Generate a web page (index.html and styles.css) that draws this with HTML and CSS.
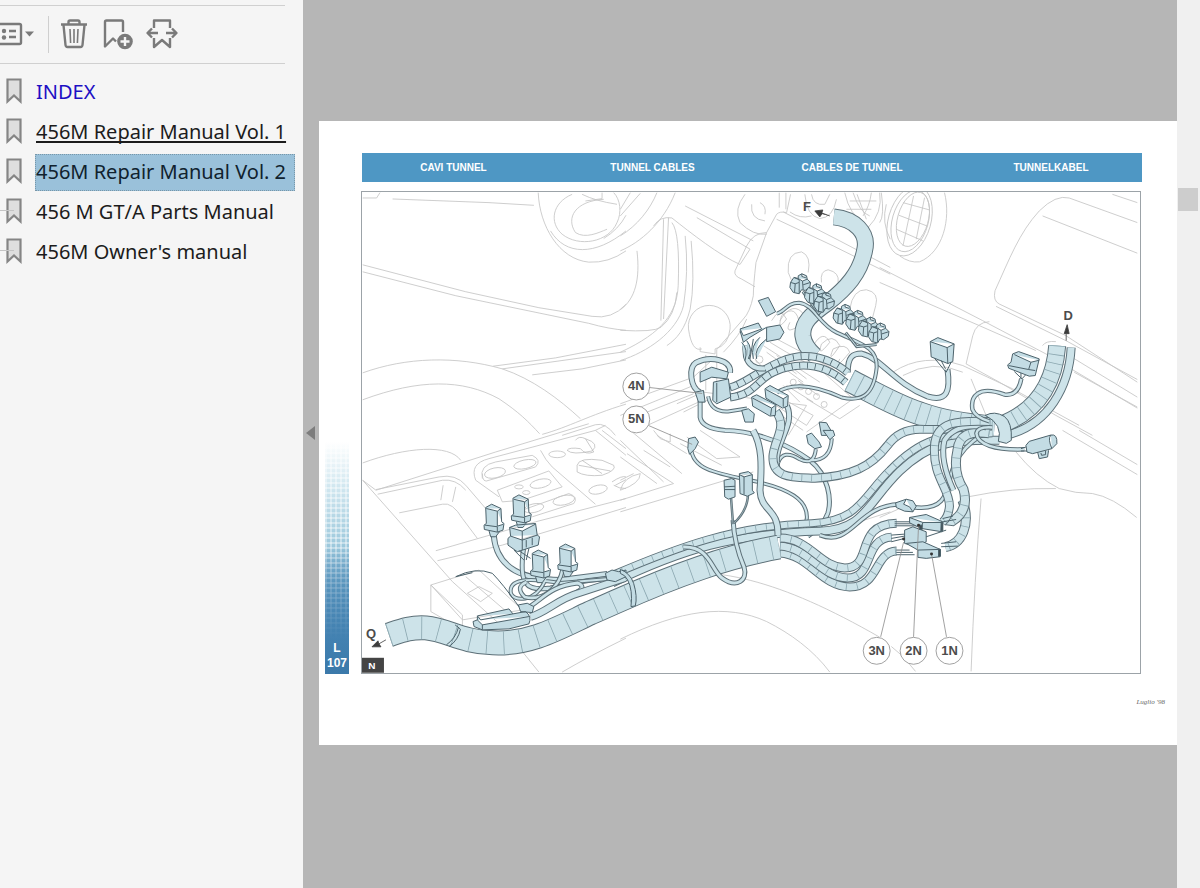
FILE: index.html
```html
<!DOCTYPE html>
<html lang="en">
<head>
<meta charset="utf-8">
<title>456M Repair Manual Vol. 2</title>
<link rel="stylesheet" href="styles.css">
</head>
<body>
<div class="app">
  <aside class="sidebar">
    <div class="toolbar">
      <button class="tool tool-options" aria-label="Options">
        <svg width="36" height="30" viewBox="0 0 36 30" class="icon"><rect x="-6" y="5" width="27" height="20" rx="1.5"/><path d="M9 12h7M9 18h7"/><g class="solid"><circle cx="4" cy="12" r="2.2"/><circle cx="4" cy="18.500" r="2.200"/><path d="M25 12.500h9l-4.500 5z"/></g></svg>
      </button>
      <span class="divider"></span>
      <button class="tool" aria-label="Delete bookmark">
        <svg width="28" height="30" viewBox="0 0 28 30" class="icon"><path d="M0 5.500h26M7.500 5V3q0-1.500 1.500-1.500h8q1.500 0 1.500 1.500v2M2.500 6l2 20q.2 2 2 2h13q1.800 0 2-2l2-20"/><path class="fine" d="M9 10l.6 14M13 10v14M17 10l-.6 14"/></svg>
      </button>
      <button class="tool" aria-label="Add bookmark">
        <svg width="30" height="30" viewBox="0 0 30 30" class="icon"><path d="M13 22.500l-3-3-8 8V3q0-1.500 1.500-1.500h15q1.500 0 1.500 1.500v10"/><circle class="solid" cx="22" cy="22.500" r="7.800"/><path class="plus" d="M22 18v9M17.500 22.500h9"/></svg>
      </button>
      <button class="tool" aria-label="Expand bookmarks">
        <svg width="32" height="30" viewBox="0 0 32 30" class="icon"><path d="M7 9V1.500h16V9M7 19v9l8-7 8 7v-9M11 14H1M19 14h10M5 9.500L.5 14 5 18.500M25 9.500l4.500 4.500-4.500 4.500"/></svg>
      </button>
    </div>
    <nav aria-label="Bookmarks">
      <ul class="bookmarks">
        <li><svg class="mark" width="16" height="26" viewBox="0 0 16 26"><path d="M1.500 1.500h13v22L8 17.500l-6.500 6z"/></svg><a class="index" href="#index">INDEX</a></li>
        <li><svg class="mark" width="16" height="26" viewBox="0 0 16 26"><path d="M1.500 1.500h13v22L8 17.500l-6.500 6z"/></svg><a class="visited" href="#vol1">456M Repair Manual Vol. 1</a></li>
        <li><svg class="mark" width="16" height="26" viewBox="0 0 16 26"><path d="M1.500 1.500h13v22L8 17.500l-6.500 6z"/></svg><a class="selected" href="#vol2" aria-current="page">456M Repair Manual Vol. 2</a></li>
        <li class="branch"><svg class="mark" width="16" height="26" viewBox="0 0 16 26"><path d="M1.500 1.500h13v22L8 17.500l-6.500 6z"/></svg><a href="#parts">456 M GT/A Parts Manual</a></li>
        <li class="branch"><svg class="mark" width="16" height="26" viewBox="0 0 16 26"><path d="M1.500 1.500h13v22L8 17.500l-6.500 6z"/></svg><a href="#owner">456M Owner's manual</a></li>
      </ul>
    </nav>
  </aside>
  <button class="collapse" aria-label="Hide panel"><svg width="10" height="14" viewBox="0 0 10 14"><path d="M9 0v14L0 7z"/></svg></button>
  <main class="viewer">
    <article class="page">
      <header class="titles"><span>CAVI TUNNEL</span><span>TUNNEL CABLES</span><span>CABLES DE TUNNEL</span><span>TUNNELKABEL</span></header>
      <div class="tab"><span>L</span><span>107</span></div>
      <figure class="plate">
        <svg id="diagram" viewBox="361 191 780 482" role="img" aria-label="Tunnel cables">
          <g class="ghost">
            <g transform="translate(355 185) scale(.33333)">
              <path d="M20 36H62L72 20M110 39L400 50L535 58M20 237L330 318L550 366L710 392Q770 402 812 356M20 258L300 330L700 413Q760 430 812 434M20 562C150 515 300 510 440 550C530 580 610 640 675 700M20 643C190 580 320 580 430 640C490 680 520 710 552 745M412 542L600 517L812 476M440 550L812 498M530 568L680 550L812 523M560 747C640 725 700 690 812 656M620 750L720 718Q750 710 780 750M720 735L750 720M548 20C552 120 610 220 700 229Q760 232 812 195M585 135C630 210 720 210 812 135M650 25C590 50 580 110 620 145C670 185 760 170 785 110C800 80 795 40 775 20M745 40C660 45 630 95 660 140C690 160 730 140 755 130M680 25Q720 45 785 55M740 20V38L690 45M745 158Q790 130 812 88"/>
            </g>
            <g transform="translate(620 185) scale(.33333)">
              <path d="M0 195C60 170 130 110 165 20M0 150C50 120 90 70 110 20M0 70L30 20M0 90L60 22M100 120Q120 90 155 96C210 140 300 210 360 236M145 95L130 400M130 100L122 405M155 110Q180 140 174 300C170 380 130 440 0 500M195 150Q206 260 190 360C170 440 80 500 0 525M213 165Q225 290 210 370C195 430 170 460 140 480M0 434Q100 440 122 425Q165 390 170 320M50 195C60 280 45 340 0 372M195 60L400 165M230 95L390 190M360 236L390 190M440 140Q400 140 380 180L345 255Q340 270 365 280L405 303M470 85L440 140L408 230Q400 300 400 330Q390 380 370 400L290 492M470 100L640 180L812 265M490 78L660 165L812 245M470 85Q480 75 500 80L512 25M375 25Q340 70 360 110Q400 150 440 145M395 55Q390 100 435 105M420 50Q440 60 435 85M478 20V65M498 20V70M510 78Q540 100 575 90M555 25Q560 90 600 98Q640 95 650 40M575 25Q580 60 615 55L630 25M675 20Q690 90 735 110M700 20Q720 80 750 90M755 20Q750 60 730 90M780 20Q790 80 745 125M800 55Q785 110 812 160M690 45H770M680 70H755M712 25L740 100M245 490Q215 500 205 430A63 63 0 1 1 330 430Q325 480 285 490V505L240 498V485M257 508V615M290 492V600M505 260Q500 200 545 198Q575 210 565 260M505 260L530 320M605 290Q600 255 625 252Q660 260 655 290M690 370Q700 310 740 312Q780 320 768 360L755 410M310 500Q360 450 380 400M0 655L220 575L290 510M0 690L220 600M30 700L220 625M70 725L235 650M170 655L250 620L560 660L505 750M190 680L270 640M450 470L500 500L610 560L700 640L560 740M470 460L640 550M480 405Q520 340 555 390M430 480L600 590M440 500L530 565M460 655L560 720L580 690L470 630M410 640L550 735M560 640L660 700L720 660M490 600L540 650M535 585L595 630"/>
              <path class="rough" d="M455 405Q480 360 500 400Q470 440 485 390Q530 350 540 420Q490 450 510 410M580 480Q610 430 630 470Q590 520 605 475Q640 440 660 480Q620 540 640 490Q680 470 690 500Q640 560 660 520M470 510L560 580M460 525L550 590M405 520L440 560M500 600L580 650"/>
              <g><circle cx="520" cy="590" r="9"/><circle cx="543" cy="604" r="9"/><circle cx="566" cy="618" r="9"/><circle cx="590" cy="633" r="9"/><circle cx="613" cy="657" r="9"/><circle cx="418" cy="522" r="11"/></g>
            </g>
            <g transform="translate(880 185) scale(.33333)">
              <ellipse cx="90" cy="105" rx="64" ry="108" transform="rotate(16 90 105)"/><ellipse cx="92" cy="105" rx="54" ry="95" transform="rotate(16 92 105)"/><ellipse cx="100" cy="100" rx="46" ry="84" transform="rotate(16 100 100)"/>
              <path d="M195 20C215 100 190 200 120 228Q90 232 60 210M70 50L150 72M58 88L142 120M50 130L130 165M102 30L70 180M135 35L110 160M0 110Q15 90 5 20M490 90L775 202M700 25L775 50M775 110L570 36Q530 25 480 75C420 140 390 220 347 315Q340 345 360 355L560 450L775 590M350 362L560 465L775 582M490 480Q500 465 530 468M0 245L310 405L500 505L775 668M0 290L300 420L470 495M570 510L775 635M585 560L775 665M330 408Q290 410 280 450L260 535L360 590L530 690L640 750M40 560Q130 500 250 540L400 610L600 720M70 570Q160 520 250 560M275 580L320 690"/>
            </g>
            <g transform="translate(355 430) scale(.33333)">
              <path d="M20 98C150 50 280 40 315 90M20 150L290 455M20 150L60 180M60 178L250 140Q300 130 330 165L390 235M65 192L260 150Q300 145 330 180M130 248L260 222Q290 215 320 265L365 325M60 180L420 65L700 -20M240 362L420 310L540 275L812 205M245 392L440 345L812 232M262 165L255 210M300 170L290 215M430 200L360 150Q340 100 400 85L720 0M380 145Q370 105 420 95L530 75Q560 90 540 110L400 150Q380 160 380 130M425 180L580 122L620 170L500 210L440 215ZM555 60Q570 90 590 110L720 222M720 0L812 75M740 0L812 55M500 240L640 190Q670 200 655 220L530 260M225 465L370 420L500 540L320 570ZM225 465V545L320 600V555M320 555L225 465M335 490L370 470L410 490L375 515ZM500 665L550 727M620 727Q700 680 812 625M290 455L440 590M330 440L470 560"/>
              <ellipse cx="418" cy="128" rx="32" ry="15" transform="rotate(-12 418 128)"/><ellipse cx="508" cy="102" rx="34" ry="13" transform="rotate(-12 508 102)"/><ellipse cx="555" cy="160" rx="32" ry="13" transform="rotate(-12 555 160)"/><ellipse cx="490" cy="170" rx="13" ry="6"/><ellipse cx="512" cy="187" rx="11" ry="6"/><ellipse cx="625" cy="210" rx="33" ry="14" transform="rotate(-12 625 210)"/><ellipse cx="535" cy="234" rx="30" ry="13" transform="rotate(-12 535 234)"/><ellipse cx="605" cy="72" rx="25" ry="10"/><ellipse cx="728" cy="178" rx="28" ry="13" transform="rotate(-12 728 178)"/>
              <path class="rough" d="M660 30Q670 15 690 25L715 65Q690 75 675 55Q640 50 635 60Q650 75 710 62Q735 40 690 25M665 105Q670 80 740 90L775 105Q785 120 740 135Q690 140 665 125ZM670 105L765 122M680 90L740 130M770 155Q800 135 812 140M775 165Q790 175 812 175M780 165L812 148"/>
            </g>
            <g transform="translate(620 430) scale(.33333)">
              <path d="M0 245L400 125M0 210L160 160L20 70M0 80L110 160M0 30L130 155M110 15L200 70M30 0L185 130M100 0L120 25L150 35V10M180 40L305 105M200 20L290 85L360 80L240 0M0 180Q10 140 60 130Q60 160 0 180M0 150L40 130M70 60L150 110M80 440C280 400 480 450 780 622M0 628C180 540 320 520 440 575C510 610 580 660 630 727M640 300L812 245"/>
            </g>
            <g transform="translate(880 430) scale(.33333)">
              <path d="M550 0L775 133M600 0L775 103M410 65Q470 140 540 175Q590 190 640 190Q700 200 773 262M265 200Q400 172 530 175M305 205Q285 450 275 725M35 650L70 680L108 725M0 262L60 235"/>
            </g>
          </g>
          <g id="cables"></g>
          <g class="parts">
            <g transform="translate(620 185) scale(.33333)">
              <path d="M415 345L445 335L467 378L440 392ZM360 430L415 412L425 430L370 450ZM440 425L480 418L492 440L480 460L440 468ZM360 435L370 470L390 455L440 425M365 470Q385 490 375 525M380 465Q400 490 385 520M400 460L390 520M420 455Q390 480 400 520M440 460Q400 490 410 520"/>
              <path d="M240 560L275 545L325 560L320 580L275 575L240 590ZM280 590L325 580L332 635L290 655L278 645ZM290 592V650M225 620L250 615L255 650L235 650Z"/>
              <path d="M395 635L410 628L468 658L466 690L450 692L398 662ZM398 638L455 668L466 660M455 668L452 690M435 610L450 600L505 630L503 662L488 668L438 638ZM438 612L490 640L503 632M490 640V664M365 675L385 670L403 685L400 710H375Z"/>
              <g id="pair"><path d="M512 290L522 275L535 278V270L546 264L560 270L562 280L572 290L570 304L556 314L545 312L538 324L520 320L510 305ZM512 290L526 294L538 290V322M526 294L524 320M522 275L538 282V290M535 278L548 286L562 280M548 286L550 312M550 297L572 290M546 264V272L558 276"/></g>
              <use href="#pair" x="44" y="30"/><use href="#pair" x="72" y="56"/><use href="#pair" x="130" y="92"/><use href="#pair" x="168" y="110"/><use href="#pair" x="206" y="130"/><use href="#pair" x="236" y="148"/>
              <path d="M598 710L620 712L642 750H605Z"/>
            </g>
            <g transform="translate(880 185) scale(.33333)">
              <path d="M152 468L175 456L224 475L220 528L205 534L155 514ZM152 468L203 486L224 475M203 486L205 534"/>
              <path class="line" d="M165 518L200 560L215 530M185 525L198 550M405 558L428 580L450 556M425 560V580"/>
              <path d="M400 505L418 498L480 520L468 570L450 572L388 548L385 538L395 530ZM405 507L455 530L480 524M455 530L448 552L388 540M448 552L468 555"/>
            </g>
            <g transform="translate(355 430) scale(.33333)">
              <g id="plug"><path d="M390 232L408 222L436 235L438 275L445 280L442 300L425 306L386 298L385 285L392 280ZM392 235L425 243L436 235M425 243V288L442 283M388 285L425 290V306M400 302L405 320H420L432 304"/></g>
              <use href="#plug" x="82" y="-28"/><use href="#plug" x="140" y="138"/><use href="#plug" x="222" y="120"/>
              <path d="M462 292L480 285L540 280L545 315L552 320L548 345L485 365L457 345V325L465 318ZM465 318L500 330L545 315M462 292L500 303L540 282M500 303V360M512 330V352M530 323V345"/>
              <path d="M352 575L365 570V558L460 537L472 552L510 545Q530 560 520 582L460 597L380 600L355 590ZM365 570L380 585L520 560M380 585V600M365 558L375 570L472 552M488 525L515 520L535 530L530 548L495 545ZM750 430L770 420L790 425L812 420V440L780 455L755 450Z"/>
              <path class="line" d="M475 360L505 390M490 362L525 385M520 355L512 390M300 440Q360 410 410 430Q440 460 490 530M300 440L350 428M305 590L314 598Q308 630 280 650M298 585L308 593Q300 625 272 645"/>
            </g>
            <g transform="translate(620 430) scale(.33333)">
              <path d="M205 25L225 20L235 35L225 55L208 72L203 55ZM358 130L385 124L397 133V180L403 188L382 198L360 190ZM358 133L372 140L397 133M372 140V193M312 150L335 145L345 150V200L325 207L314 200ZM312 170L345 168M314 178H345M560 15L575 8L598 35L605 50L585 55L565 40ZM610 0H640L645 15L630 28ZM0 418Q30 430 40 460Q52 500 45 528L32 530Q38 480 22 450Q15 435 0 430Z"/>
            </g>
            <g transform="translate(880 430) scale(.33333)">
              <path d="M75 300L100 290L140 305V335L110 350L75 340Z"/>
              <path class="line" d="M45 275H120M45 281H125M45 287H120M35 315L75 312M35 325L75 318M35 335L75 325M50 360H90M50 367H100M50 374H105M190 265L220 258M190 275L230 268M140 320L200 300M185 340L230 335M185 350L235 348"/>
              <path d="M90 262L140 253L190 275L188 305L125 295L90 278ZM90 262L130 277L190 277M130 277L125 295M80 340L130 335L182 358V380L140 385L115 382V360ZM115 360L182 358"/>
              <path class="dark" d="M185 275L190 277V302L184 303ZM120 285L128 285V298H120ZM177 357L183 358V378L177 379Z"/>
              <path d="M48 218L80 207L100 212L110 228L100 245L75 243L50 232ZM80 207L72 222L90 230L100 245M440 45L450 33L515 14Q535 10 533 40L518 55L460 70L443 65ZM515 14Q505 25 518 55M475 65L480 85L505 80L508 60M485 68L487 75L499 73V62M425 55L440 50M425 62L443 62"/>
            </g>
            <path d="M986 415Q995 410 1005 416Q1013 422 1012 440L1007 443L999 441Q1004 424 986 415Z"/>
          </g>
          <g class="callouts">
            <path d="M649 387L702 393M648 425L692 444M881 637L904 542M914 637L919 525M947 637L932 554"/>
            <circle cx="636" cy="386" r="13.500"/><circle cx="636" cy="419" r="13.500"/><circle cx="877" cy="651" r="13.500"/><circle cx="914" cy="651" r="13.500"/><circle cx="950" cy="651" r="13.500"/>
            <g class="label"><text x="636" y="390">4N</text><text x="636" y="423">5N</text><text x="877" y="655">3N</text><text x="914" y="655">2N</text><text x="950" y="655">1N</text><text x="807" y="210">F</text><text x="1069" y="319">D</text><text x="370" y="638">Q</text></g>
            <path class="arrow" d="M830 215L822 212L823 209L815 210L820 216L822 213M1067 340V333H1070L1068 324L1065 333H1067M385 640L378 644L377 641L371 647L380 647L378 644"/>
            <circle class="pin" cx="904" cy="539" r="1.500"/><circle class="pin" cx="919" cy="525" r="1.500"/><circle class="pin" cx="932" cy="554" r="1.500"/>
          </g>
          <rect class="tag" x="361" y="658" width="22" height="15"/><text class="tag-text" x="371" y="669">N</text>
        </svg>
      </figure>
      <footer>Luglio '98</footer>
    </article>
  </main>
  <div class="scrollbar"><div class="thumb"></div></div>
</div>
<script src="diagram.js"></script>
</body>
</html>
```
FILE: styles.css
```css
* { box-sizing: border-box; }
body { margin: 0; background: #b6b6b6; font-family: "Noto Sans", "Open Sans", sans-serif; }
.app { display: flex; min-height: 100vh; }
button { border: 0; padding: 0; background: none; display: block; }

.sidebar { flex: 0 0 303px; background: #f5f5f5; padding-top: 5px; }
.toolbar { display: flex; align-items: center; height: 59px; margin-right: 18px; padding-bottom: 1px; border: solid #d0d0d0; border-width: 1px 0; gap: 14px; }
.tool svg { display: block; overflow: visible; }
.divider { width: 1px; height: 37px; background: #cfcfcf; margin-right: -2px; }
.tool-options { margin-right: -2px; }
.icon { fill: none; stroke: #7a7a7a; stroke-width: 2.4; stroke-linejoin: round; }
.icon .fine { stroke-width: 1.6; }
.icon .solid { fill: #7a7a7a; stroke: none; }
.icon .plus { stroke: #f5f5f5; stroke-width: 2.4; }

.bookmarks { list-style: none; margin: 0; padding: 7px 8px 0 6px; }
.bookmarks li { display: flex; align-items: center; height: 40px; gap: 13px; position: relative; }
.branch::before { content: ""; position: absolute; left: -6px; top: 19px; width: 14px; height: 1px; background: #c4c4c4; }
.mark { flex: none; fill: #dedede; stroke: #858585; stroke-width: 2.2; }
.bookmarks a { flex: 1; height: 37px; line-height: 35px; margin-top: 2px; padding-left: 1px; font-size: 20px; color: #1c1c1c; text-decoration: none; white-space: nowrap; }
.bookmarks a.index { color: #1d10c4; }
.bookmarks a.visited { text-decoration: underline; text-decoration-thickness: 2px; text-underline-offset: 2px; text-decoration-skip-ink: none; }
.bookmarks a.selected { background: #9ac1da; outline: 1px dotted #7896a8; outline-offset: -1px; color: #10222e; }

.collapse { flex: 0 0 16px; background: #b6b6b6; display: flex; align-items: center; justify-content: center; padding-bottom: 22px; }
.collapse path { fill: #7d7d7d; }
.viewer { flex: 1; min-width: 0; padding: 121px 0 142px; background: #b6b6b6; }
.page { display: grid; grid-template-columns: 24px 1fr; column-gap: 12px; padding: 32px 36px 39px 6px; background: #fff; font-family: "Liberation Sans", Arial, sans-serif; }
.titles { grid-column: 2; display: grid; grid-template-columns: 191fr 199fr 200fr 190fr; align-items: center; text-align: center; height: 29px; margin: 0 -1px 9px 1px; background: #4e97c4; color: #fff; font-size: 10px; font-weight: bold; white-space: nowrap; }
.titles span:first-child { padding-right: 8px; }
.titles span:last-child { padding-left: 8px; }
.tab { align-self: end; height: 232px; display: flex; flex-direction: column; justify-content: flex-end; align-items: center; padding-bottom: 3px; color: #fff; font-size: 12px; line-height: 15px; font-weight: bold;
  background:
    linear-gradient(transparent 45%, rgba(72,133,178,.5) 60%, #4281b1 85%, #3b79aa),
    repeating-linear-gradient(90deg, rgba(255,255,255,.4) 0 2px, transparent 2px 5px),
    repeating-linear-gradient(0deg, rgba(255,255,255,.4) 0 2px, transparent 2px 5px),
    linear-gradient(#fff 0, #cfe6ef 20%, #9cc8dc 45%, #6fa9cb 60%, #4281b1 90%); }
.plate { margin: 0; border: 1px solid #9ca3a8; }
.plate svg { display: block; width: 100%; height: auto; }
footer { grid-column: 2; justify-self: end; margin: 24px -24px 0 0; font: italic 7px/8px "Liberation Serif", serif; color: #666; }
.scrollbar { flex: 0 0 23px; background: #f0f0f0; padding: 188px 2px 0 1px; }
.thumb { height: 23px; background: #cdcdcd; }

.ghost { fill: none; stroke: #c6c6c6; stroke-width: 2.6; }
.ghost .rough { stroke: #b8b8b8; stroke-width: 2.2; }
.cable { fill: none; }
.cable-edge { stroke: #5d7078; }
.cable-body { stroke: #cde3e9; }
.cable-ring { stroke: #8ba7b0; }
.cable-braid { stroke: #48606a; }
.parts { fill: #c3dce4; stroke: #4c626b; stroke-width: 3; stroke-linejoin: round; }
.parts > path { stroke-width: 1; fill: #cde3e9; }
.parts .line { fill: none; }
.parts .dark { fill: #3f4d53; }
.callouts { fill: none; stroke: #8a8a8a; stroke-width: .8; }
.callouts circle { fill: #fff; }
.label { fill: #4c4c4c; stroke: none; font: bold 13px "Liberation Sans", Arial, sans-serif; text-anchor: middle; }
.callouts .arrow { fill: #3c3c3c; stroke: #3c3c3c; }
.callouts .pin { fill: #333; stroke: none; }
.tag { fill: #444; }
.tag-text { fill: #fff; font: bold 10px "Liberation Sans", Arial, sans-serif; text-anchor: middle; }
```
FILE: diagram.js
```js
// Each cable: centre line, outer width, spacing of the winding marks (0 for none), braided or not.
const cables = [
  ["M834 216C855 218 869 232 865 249C861 272 846 288 828 302C811 314 802 322 803 335Q804 345 815 355", 17, 0],
  ["M848 372C848 356 853 353 862 353C882 358 895 383 928 396C948 402 951 390 948 369", 6, 0],
  ["M850 380C870 390 895 405 920 413Q950 424 995 427", 24, 10],
  ["M1072 347C1070 385 1050 425 1006 435", 9, 0],
  ["M1058 345C1055 385 1036 412 1000 425", 18, 8],
  ["M730 387C745 383 757 371 780 361Q815 346 848 372", 8, 7, true],
  ["M730 397C760 393 755 375 787 367Q820 359 846 382", 8, 7, true],
  ["M745 345L746 356Q750 369 765 368", 6, 0],
  ["M777 313C785 311 787 302 799 302C815 304 818 323 837 332C860 343 878 346 877 367C874 397 860 401 842 397C820 387 795 380 777 392", 4, 0],
  ["M700 392C690 387 688 367 696 362C710 355 732 359 730 372", 6, 0],
  ["M700 400V417Q702 428 725 430C755 430 790 445 810 460C829 475 832 500 828 513Q824 525 808 536", 5, 0],
  ["M708 396Q711 412 728 411L747 408", 4, 0],
  ["M691 448C692 469 716 473 750 480C790 488 808 500 807 518L804 534", 4, 0],
  ["M832 438Q831 461 810 460M816 449Q814 466 800 459Q783 448 778 463Q777 473 784 476", 4, 0],
  ["M787 405C796 425 775 442 777 462", 6, 0],
  ["M776 411C788 427 774 439 773 456C772 479 795 477 815 478C852 476 872 466 888 445Q901 427 925 429H990", 9, 9],
  ["M612 583C680 550 735 533 820 531C865 530 868 502 900 471C930 443 950 439 1000 440", 9, 0],
  ["M612 575C675 548 735 525 812 523C860 521 863 496 890 470C925 434 945 435 993 433", 8, 10],
  ["M820 535C852 548 857 505 900 504M914 507C955 512 945 480 956 463Q963 447 983 434", 4.5, 0],
  ["M963 500C972 525 962 544 946 547", 10, 8],
  ["M990 433Q960 428 958 450Q953 472 964 489Q970 510 953 521L945 520", 10, 9],
  ["M987 427Q957 422 945 440Q940 460 954 490", 6, 0],
  ["M991 421C957 420 937 421 935 445C933 478 950 487 950 506Q949 517 943 522", 9, 9],
  ["M780 553C810 555 820 586 850 587C880 587 874 552 897 551", 9, 10],
  ["M780 546C810 548 820 577 848 578C875 578 863 539 892 537", 9, 10],
  ["M780 538C810 538 820 567 845 568C875 568 853 524 897 523", 9, 10],
  ["M493 535C496 571 525 579 560 580L607 574", 6, 0],
  ["M523 548C518 584 525 592 550 588Q585 579 625 577", 5, 0],
  ["M545 579C537 603 510 603 510 591C510 577 534 579 560 583L608 579", 4, 0],
  ["M562 570C559 585 545 602 524 597Q514 587 526 582", 4.5, 0],
  ["M525 609C540 602 548 586 577 583Q587 587 575 593", 5, 0],
  ["M530 617C547 612 557 599 579 593L625 578", 8, 0],
  ["M388 635C400 631 410 627 425 628C447 630 460 642 492 643C530 645 560 627 590 613C625 598 650 585 700 568Q740 554 779 547", 25, 16],
  ["M683 547C710 546 711 570 722 578C737 589 748 580 744 567C738 553 734 540 733 520", 5, 0],
  ["M753 430C762 445 762 465 760 490C761 512 779 508 778 535", 7, 0],
  ["M731 498L733 524M748 493Q748 510 734 523", 2.5, 0],
  ["M1022 378Q1019 396 1005 394C978 384 971 397 973 409Q976 417 990 421", 4.5, 0],
  ["M1025 449C995 450 978 444 977 433Q978 426 993 427", 4.5, 0],
  ["M803 291L819 313L831 300M846 332L857 346L877 344", 3, 0]
];
const layer = document.getElementById("cables");
function stroke(d, kind, width, dash) {
  const p = document.createElementNS("http://www.w3.org/2000/svg", "path");
  p.setAttribute("d", d);
  p.setAttribute("class", "cable " + kind);
  p.setAttribute("stroke-width", width);
  if (dash) p.setAttribute("stroke-dasharray", dash);
  layer.appendChild(p);
}
for (const [d, width, spacing, braid] of cables) {
  stroke(d, "cable-edge", width);
  stroke(d, "cable-body", width - 2);
  if (spacing) stroke(d, braid ? "cable-braid" : "cable-ring", width - 2, "0.8 " + spacing);
}
```
